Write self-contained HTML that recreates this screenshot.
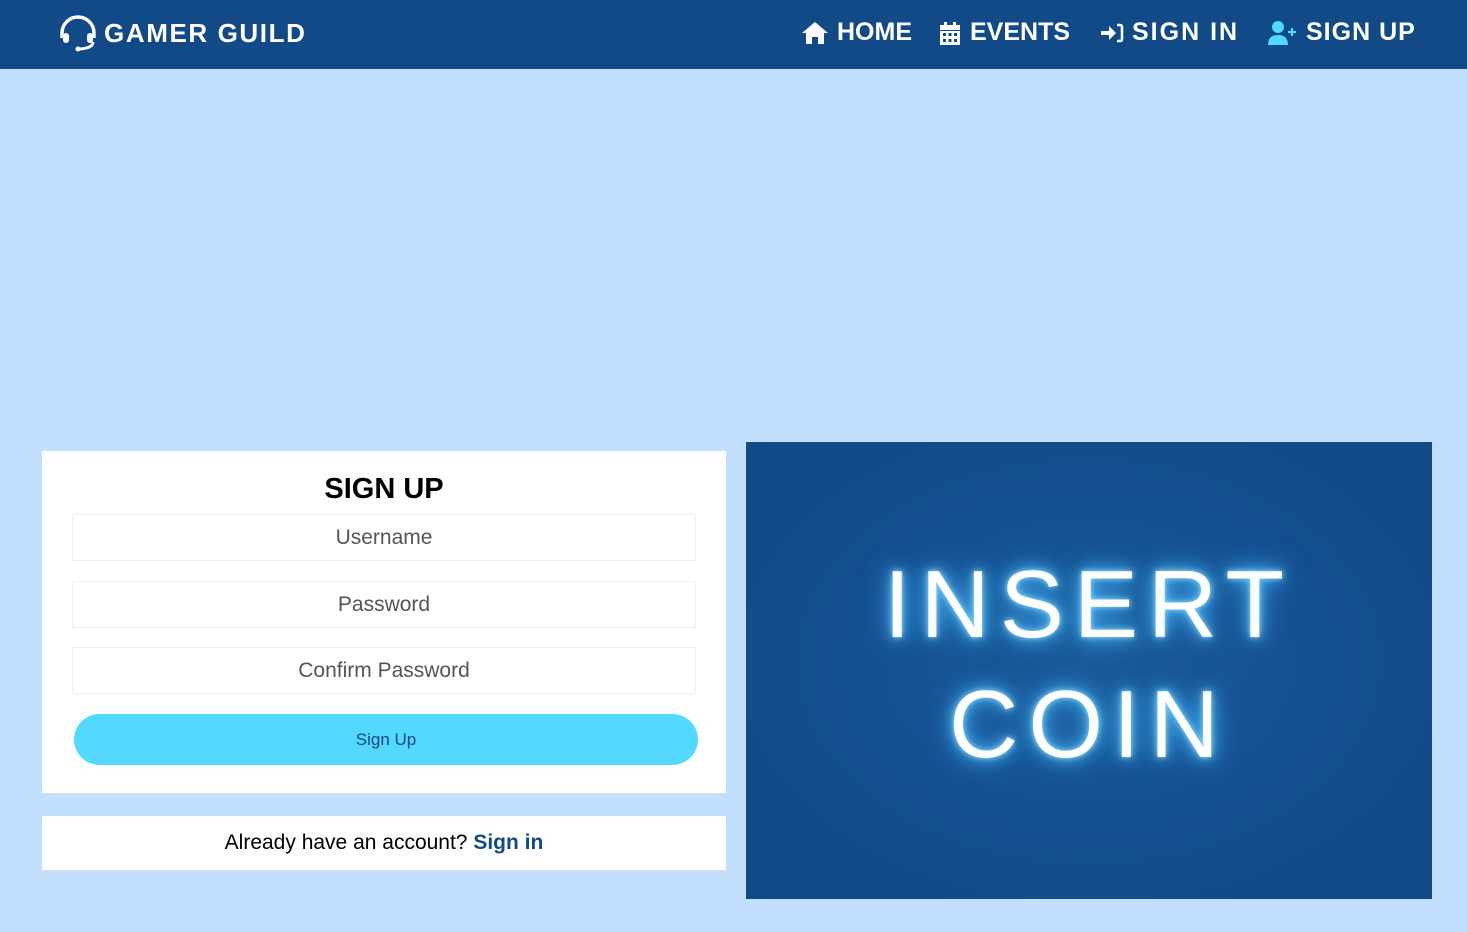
<!DOCTYPE html>
<html><head><meta charset="utf-8"><style>
*{margin:0;padding:0;box-sizing:border-box}
body{width:1467px;height:932px;background:#c2e0fe;font-family:"Liberation Sans",sans-serif;position:relative;overflow:hidden}
.nav{position:absolute;left:0;top:0;width:1467px;height:69px;background:#124a87}
.brand{position:absolute;left:58px;top:14px;display:flex;align-items:center;color:#fff;font-weight:bold;font-size:26px;letter-spacing:1.6px}
.links{position:absolute;top:18px;color:#fff;font-weight:bold;font-size:25px;display:flex;align-items:center}
.links span{display:inline-block}
.card{position:absolute;background:#fff;border-bottom:1px solid #ddd}
.inp{position:absolute;left:72px;width:624px;height:47px;border:1px solid #eceff3;color:#555;font-size:21px;text-align:center;line-height:45px}
.btn{position:absolute;left:74px;top:714px;width:624px;height:51px;border-radius:26px;background:#53d9ff;color:#124a87;font-size:17px;text-align:center;line-height:51px}
.img{position:absolute;left:746px;top:442px;width:686px;height:457px;background:radial-gradient(ellipse at 50% 48%,#1a5a98 0%,#145091 45%,#124a87 80%)}
.neon{position:absolute;left:0;width:686px;text-align:center;color:#fff;font-weight:normal;text-shadow:0 0 6px #9fe3ff,0 0 16px #56c8ff,0 0 30px #3aa8ff}
</style></head><body>
<div class="nav">
 <div class="brand">
  <svg width="40" height="38" viewBox="0 0 40 38"><path d="M4 24 V19 A16 16 0 0 1 36 19 V24" fill="none" stroke="#fff" stroke-width="3.5"/><rect x="5" y="19" width="6" height="10" rx="3" fill="#fff"/><rect x="29" y="19" width="6" height="10" rx="3" fill="#fff"/><path d="M35 28 Q35 34 22 35" fill="none" stroke="#fff" stroke-width="3"/><circle cx="20" cy="35" r="2.5" fill="#fff"/></svg>
  <span style="margin-left:6px">GAMER GUILD</span>
 </div>
 <div class="links" style="left:801px">
  <svg width="28" height="24" viewBox="0 0 28 24"><path d="M14 1 L27 12 H23 V23 H17 V16 H11 V23 H5 V12 H1 Z" fill="#fff"/></svg>
  <span style="margin-left:8px">HOME</span>
 </div>
 <div class="links" style="left:940px">
  <svg width="20" height="24" viewBox="0 0 20 24"><rect x="4" y="1" width="3" height="5" fill="#fff"/><rect x="13" y="1" width="3" height="5" fill="#fff"/><rect x="0" y="4" width="20" height="5" fill="#fff"/><rect x="0" y="10" width="20" height="14" fill="#fff"/><g fill="#124a87"><rect x="3" y="12" width="3" height="3"/><rect x="8.5" y="12" width="3" height="3"/><rect x="14" y="12" width="3" height="3"/><rect x="3" y="18" width="3" height="3"/><rect x="8.5" y="18" width="3" height="3"/><rect x="14" y="18" width="3" height="3"/></g></svg>
  <span style="margin-left:10px">EVENTS</span>
 </div>
 <div class="links" style="left:1100px">
  <svg width="24" height="24" viewBox="0 0 24 24"><path d="M1 10 H9 V5 L16 12 L9 19 V14 H1 Z" fill="#fff"/><path d="M17 4 H20 Q22 4 22 6 V18 Q22 20 20 20 H17" fill="none" stroke="#fff" stroke-width="2.5"/></svg>
  <span style="margin-left:8px;letter-spacing:2px">SIGN IN</span>
 </div>
 <div class="links" style="left:1268px">
  <svg width="30" height="26" viewBox="0 0 30 26"><circle cx="10" cy="7" r="6" fill="#53d9ff"/><path d="M0 25 Q0 15 10 15 Q20 15 20 25 Z" fill="#53d9ff"/><path d="M24 8 V16 M20 12 H28" stroke="#53d9ff" stroke-width="2.2"/></svg>
  <span style="margin-left:8px;letter-spacing:1px">SIGN UP</span>
 </div>
</div>

<div class="card" style="left:42px;top:451px;width:684px;height:343px"></div>
<div style="position:absolute;left:42px;top:473px;width:684px;text-align:center;font-size:29px;font-weight:bold;color:#000">SIGN UP</div>
<div class="inp" style="top:514px">Username</div>
<div class="inp" style="top:581px">Password</div>
<div class="inp" style="top:647px">Confirm Password</div>
<div class="btn">Sign Up</div>

<div class="card" style="left:42px;top:816px;width:684px;height:55px;text-align:center;line-height:54px;font-size:21px;color:#000">Already have an account? <b style="color:#124a87">Sign in</b></div>

<div class="img">
 <div class="neon" style="top:108px;font-size:96px;letter-spacing:10px;line-height:110px">INSERT</div>
 <div class="neon" style="top:228px;font-size:96px;letter-spacing:10px;line-height:110px">COIN</div>
</div>
</body></html>
